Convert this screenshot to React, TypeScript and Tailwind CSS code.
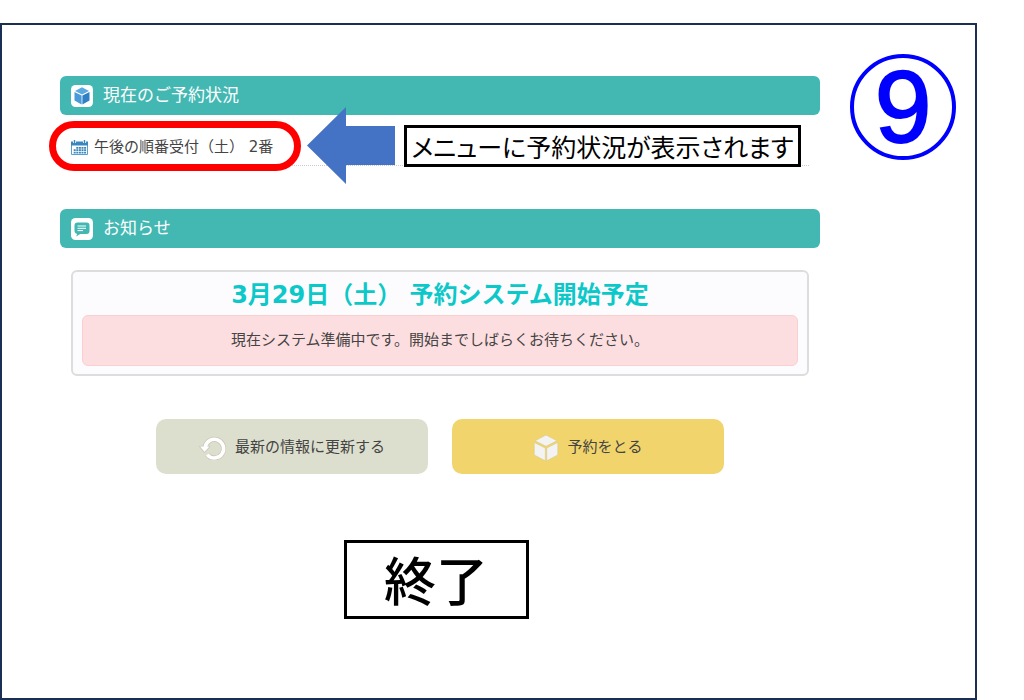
import type { ReactNode } from 'react';

function CubeBadgeIcon() {
  return (
    <svg viewBox="0 0 22 22" className="size-[22px] shrink-0" aria-hidden="true">
      <rect width="22" height="22" rx="4.5" fill="#fff" />
      <path d="M11 2.2 18 6l-7 3.600L4 6Z" fill="#5aa9e0" />
      <path d="M3.500 6.900 10.600 10.500v9L3.500 15.600Z" fill="#4a9ad8" />
      <path d="M18.500 6.900 11.400 10.500v9l7.100-3.900Z" fill="#2f80c4" />
    </svg>
  );
}

function ChatBadgeIcon() {
  return (
    <svg viewBox="0 0 22 22" className="size-[22px] shrink-0" aria-hidden="true">
      <rect width="22" height="22" rx="4.5" fill="#fff" />
      <path
        d="M6.500 4.500h9a3 3 0 0 1 3 3V13a3 3 0 0 1-3 3H9.200L5.200 18.600l.9-2.700A3 3 0 0 1 3.500 13V7.500a3 3 0 0 1 3-3Z"
        fill="#43b8b3"
      />
      <path d="M6.500 8H15M6.500 10.300H15M6.500 12.600H12" stroke="#fff" strokeWidth="1" />
    </svg>
  );
}

function CalendarIcon() {
  return (
    <svg viewBox="0 0 17 15" className="h-[15px] w-[17px] shrink-0" aria-hidden="true">
      <path d="M.5 2.500h16v12H.5Z" fill="#fff" stroke="#5b9fcd" />
      <path d="M0 1.500h17v4H0Z" fill="#3a87bd" />
      <path d="M3.500 0v3M13.500 0v3" stroke="#fff" strokeWidth="3" />
      <path d="M3.500 0v3M13.500 0v3" stroke="#3a87bd" strokeWidth="1.400" />
      <path
        d="M5.300 7.800h2m.6 0h2m.6 0h2m.6 0h2M2.700 10.200h2m.6 0h2m.6 0h2m.6 0h2m.6 0h2M2.700 12.600h2m.6 0h2m.6 0h2m.6 0h2m.6 0h2"
        stroke="#3a87bd"
        strokeWidth="1.800"
      />
    </svg>
  );
}

function ReloadIcon() {
  return (
    <svg viewBox="0 0 28 24" className="h-6 w-7 shrink-0" fill="none" aria-hidden="true">
      {/* Soft outline under the white arrow */}
      <g stroke="#cbc5b5" strokeLinejoin="round">
        <path d="M6.200 11A9.300 9.300 0 1 1 8.200 18.600" strokeWidth="5" />
        <path d="M1 10.500h9.500L5.500 16Z" strokeWidth="1.600" />
      </g>
      <path d="M6.200 11A9.300 9.300 0 1 1 8.200 18.600" stroke="#fff" strokeWidth="3.600" />
      <path d="M1 10.500h9.500L5.500 16Z" fill="#fff" />
    </svg>
  );
}

function CubeIcon() {
  return (
    <svg viewBox="0 0 26 28" className="h-7 w-[26px] shrink-0" aria-hidden="true">
      <g fill="#f3f3f3" stroke="#d9c98c" strokeWidth=".6">
        <path d="M13 1 24 6.800 13 12.300 2 6.800Z" />
        <path d="M1.200 8.500 12.300 14v12.800L1.200 21Z" />
        <path d="M24.800 8.500 13.700 14v12.800L24.800 21Z" />
      </g>
    </svg>
  );
}

function SectionHeader({ icon, children }: { icon: ReactNode; children: ReactNode }) {
  return (
    <h2 className="flex h-[39px] items-center gap-2.5 rounded-md bg-[#43b8b3] px-[11px] text-[17px] text-white">
      {icon}
      {children}
    </h2>
  );
}

function StepBadge({ step }: { step: number }) {
  return (
    <div className="flex size-[106px] shrink-0 items-center justify-center rounded-full border-4 border-[#0000ff] font-['Liberation_Sans',sans-serif] text-[102px] leading-none text-[#0000ff] [-webkit-text-stroke:2px_#0000ff]">
      {step}
    </div>
  );
}

export default function App() {
  return (
    <div className="flex min-h-screen flex-col bg-white pt-[23px] pr-[47px] font-['DejaVu_Sans','Noto_Sans_CJK_JP',sans-serif] text-[15px] text-[#444]">
      <div className="flex flex-1 items-start gap-[30px] border-2 border-[#1b2f55] pt-[29px] pr-[19px] pl-[58px]">
        <main className="mt-[22px] min-w-0 flex-1">
          <section>
            <SectionHeader icon={<CubeBadgeIcon />}>現在のご予約状況</SectionHeader>
            <div className="relative mx-[11px] flex h-[51px] items-center gap-1.5 border-b border-dotted border-[#ccc] pt-3.5">
              <CalendarIcon />
              <p className="whitespace-pre">午後の順番受付（土） 2番</p>

              {/* Annotations over the row */}
              <div className="absolute top-[6px] -left-[22px] h-[50px] w-[252px] rounded-full border-7 border-[#ff0000]" />
              <svg viewBox="0 0 88 77" className="absolute -top-2 left-[236px] h-[77px] w-[88px]" aria-hidden="true">
                <path d="M0 38.500 39 0v19h49v39H39v19Z" fill="#4472c4" />
              </svg>
              <p className="absolute top-[10px] left-[333px] flex h-[42px] w-[397px] items-center justify-center border-3 border-black bg-white pt-1 text-[25px] leading-none whitespace-nowrap text-black [font-feature-settings:'palt']">
                メニューに予約状況が表示されます
              </p>
            </div>
          </section>

          <section className="mt-[43px]">
            <SectionHeader icon={<ChatBadgeIcon />}>お知らせ</SectionHeader>
            <div className="mx-[11px] mt-[22px] rounded-md border-2 border-[#ddd] bg-[#fcfcff] px-[9px] pt-1 pb-2 text-center">
              <h3 className="text-2xl leading-[39px] font-bold text-[#0cc8c8]">3月29日（土） 予約システム開始予定</h3>
              <p className="flex h-[51px] items-center justify-center rounded-md border border-[#fccfcf] bg-[#fddee0]">
                現在システム準備中です。開始までしばらくお待ちください。
              </p>
            </div>
          </section>

          <div className="mt-[43px] flex justify-center gap-6">
            <button
              type="button"
              className="flex h-[55px] w-[272px] items-center justify-center gap-2 rounded-[10px] bg-[#dddfce] pt-0.5"
            >
              <ReloadIcon />
              最新の情報に更新する
            </button>
            <button
              type="button"
              className="flex h-[55px] w-[272px] items-center justify-center gap-2 rounded-[10px] bg-[#f1d56c] pt-0.5"
            >
              <CubeIcon />
              予約をとる
            </button>
          </div>

          <div className="mt-[66px] flex justify-center pr-2">
            <p className="flex h-[79px] w-[185px] items-center justify-center border-3 border-black pt-1.5 text-[52px] leading-none font-medium text-black">
              終了
            </p>
          </div>
        </main>

        <StepBadge step={9} />
      </div>
    </div>
  );
}
